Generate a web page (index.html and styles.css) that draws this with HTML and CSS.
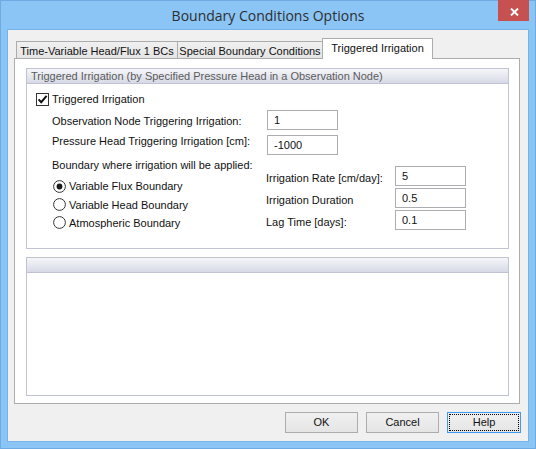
FILE: index.html
```html
<!DOCTYPE html>
<html>
<head>
<meta charset="utf-8">
<title>Boundary Conditions Options</title>
<link rel="stylesheet" href="styles.css">
</head>
<body>
<div class="window">
  <div class="titlebar">
    <span class="title">Boundary Conditions Options</span>
    <div class="close">
      <svg width="9" height="8" viewBox="0 0 9 8"><path d="M1 0.5 L8 7.5 M8 0.5 L1 7.5" stroke="#fff" stroke-width="1.9" fill="none"/></svg>
    </div>
  </div>
  <div class="client">
    <div class="tabs">
      <div class="tab tab-1">Time-Variable Head/Flux 1 BCs</div>
      <div class="tab tab-2">Special Boundary Conditions</div>
      <div class="tab tab-3 active">Triggered Irrigation</div>
    </div>
    <div class="panel">
      <div class="group group-main">
        <div class="ghead">Triggered Irrigation (by Specified Pressure Head in a Observation Node)</div>
        <div class="gbody">
          <div class="check-row">
            <span class="checkbox">
              <svg width="11" height="11" viewBox="0 0 11 11"><path d="M1.6 5.4 L4.2 8.2 L9.6 1.9" stroke="#111" stroke-width="2" fill="none"/></svg>
            </span>
            <span>Triggered Irrigation</span>
          </div>
          <div class="fields">
            <span class="lbl lbl-obs">Observation Node Triggering Irrigation:</span>
            <div class="input">1</div>
            <span class="lbl lbl-pres">Pressure Head Triggering Irrigation [cm]:</span>
            <div class="input">-1000</div>
          </div>
          <div class="split">
            <div class="left">
              <div class="caption">Boundary where irrigation will be applied:</div>
              <div class="radio">
                <svg width="13" height="13" viewBox="0 0 13 13"><circle cx="6.5" cy="6.5" r="5.9" fill="#fff" stroke="#333" stroke-width="1"/><circle cx="6.5" cy="6.5" r="2.9" fill="#1a1a1a"/></svg>
                <span>Variable Flux Boundary</span>
              </div>
              <div class="radio">
                <svg width="13" height="13" viewBox="0 0 13 13"><circle cx="6.5" cy="6.5" r="5.9" fill="#fff" stroke="#333" stroke-width="1"/></svg>
                <span>Variable Head Boundary</span>
              </div>
              <div class="radio">
                <svg width="13" height="13" viewBox="0 0 13 13"><circle cx="6.5" cy="6.5" r="5.9" fill="#fff" stroke="#333" stroke-width="1"/></svg>
                <span>Atmospheric Boundary</span>
              </div>
            </div>
            <div class="right">
              <span class="rlbl">Irrigation Rate [cm/day]:</span>
              <div class="input">5</div>
              <span class="rlbl">Irrigation Duration</span>
              <div class="input">0.5</div>
              <span class="rlbl">Lag Time [days]:</span>
              <div class="input">0.1</div>
            </div>
          </div>
        </div>
      </div>
      <div class="group group-empty">
        <div class="ghead"></div>
      </div>
    </div>
    <div class="buttons">
      <div class="btn">OK</div>
      <div class="btn">Cancel</div>
      <div class="btn btn-focus">Help</div>
    </div>
  </div>
</div>
</body>
</html>
```

FILE: styles.css
```css
html, body {
  margin: 0;
  padding: 0;
  background: #8ac5f6;
}

body {
  font-family: "Liberation Sans", Arial, sans-serif;
  font-size: 11px;
  color: #111;
}

.window {
  width: 536px;
  height: 449px;
  box-sizing: border-box;
  border: 1px solid #6eaae4;
  background: #8ac5f6;
  padding: 0 6px 6px;
  display: flex;
  flex-direction: column;
  position: relative;
}

.titlebar {
  height: 28px;
  box-sizing: border-box;
  padding-top: 2px;
  display: flex;
  justify-content: center;
  align-items: flex-start;
}

.title {
  font-family: "Open Sans", "Noto Sans", sans-serif;
  font-size: 14px;
  line-height: 26px;
  color: #2e2e2e;
}

.close {
  position: absolute;
  top: -1px;
  right: 6px;
  width: 31px;
  height: 21px;
  background: #c75050;
  display: flex;
  justify-content: center;
  align-items: center;
  padding-top: 2px;
  box-sizing: border-box;
}

.close svg {
  display: block;
  margin-left: 2px;
}

.client {
  flex: 1;
  border: 1px solid #78b2ea;
  background: #f0f0f0;
  display: flex;
  flex-direction: column;
}

/* Tabs */
.tabs {
  display: flex;
  align-items: flex-end;
  height: 20px;
  margin: 8px 0 0 8px;
  position: relative;
  z-index: 2;
}

.tab {
  box-sizing: border-box;
  height: 17px;
  border: 1px solid #acacac;
  border-bottom: none;
  background: linear-gradient(#f0f0f0, #e5e5e5);
  text-align: center;
  line-height: 16px;
  padding-top: 1px;
  white-space: nowrap;
}

.tab-1 { width: 162px; }
.tab-2 { width: 146px; margin-left: -1px; }
.tab-3 { width: 111px; margin-left: -1px; }

.tab.active {
  height: 21px;
  margin-bottom: -1px;
  background: #fff;
  padding-top: 1px;
}

/* Panel */
.panel {
  margin-left: 6px;
  width: 506px;
  height: 346px;
  box-sizing: border-box;
  border: 1px solid #acacac;
  background: #fff;
  display: flex;
  flex-direction: column;
  padding: 9px 10px 7px 11px;
  gap: 8px;
}

.group {
  box-sizing: border-box;
  border: 1px solid #bfc3d4;
  background: #fff;
}

.group-main { height: 181px; }
.group-empty { height: 139px; }

.ghead {
  height: 15px;
  box-sizing: border-box;
  border-bottom: 1px solid #bfc3d4;
  background: linear-gradient(#f5f6f9, #d7dae6);
  padding-left: 4px;
  line-height: 14px;
  color: #5b5b5b;
  white-space: nowrap;
}

.gbody {
  padding: 9px 0 0 9px;
}

.check-row {
  display: flex;
  align-items: center;
  gap: 3px;
  height: 13px;
  line-height: 13px;
}

.checkbox {
  width: 13px;
  height: 13px;
  box-sizing: border-box;
  border: 1px solid #333;
  background: #fff;
  display: flex;
  align-items: center;
  justify-content: center;
}

.checkbox svg { display: block; }

.fields {
  display: grid;
  grid-template-columns: 215px 71px;
  grid-auto-rows: 20px;
  row-gap: 5px;
  margin: 4px 0 0 16px;
}

.lbl {
  line-height: 20px;
  white-space: nowrap;
}

.lbl-obs { padding-top: 1px; }
.lbl-pres { margin-top: -4px; }

.input {
  box-sizing: border-box;
  height: 20px;
  border: 1px solid #abadb3;
  background: #fff;
  padding: 1px 0 0 6px;
  line-height: 17px;
}

.split {
  display: flex;
  margin: 3px 0 0 16px;
}

.left {
  width: 214px;
}

.caption {
  height: 14px;
  line-height: 14px;
  margin-bottom: 5px;
  white-space: nowrap;
}

.radio {
  height: 18.4px;
  display: flex;
  align-items: center;
  gap: 3px;
  margin-left: 1px;
  line-height: 18px;
  white-space: nowrap;
}

.radio svg { display: block; flex: none; }

.right {
  padding-top: 8px;
  display: grid;
  grid-template-columns: 129px 71px;
  grid-auto-rows: 20px;
  row-gap: 2px;
  align-content: start;
}

.rlbl {
  line-height: 20px;
  padding-top: 2px;
  white-space: nowrap;
}

/* Buttons */
.buttons {
  display: flex;
  justify-content: flex-end;
  gap: 8px;
  margin-top: 8px;
  padding-right: 7px;
}

.btn {
  box-sizing: border-box;
  width: 73px;
  height: 21px;
  border: 1px solid #acacac;
  background: linear-gradient(#f0f0f0, #e5e5e5);
  text-align: center;
  line-height: 19px;
}

.btn-focus {
  border-color: #3c9af0;
  width: 74px;
  outline: 1px dotted #000;
  outline-offset: -3px;
}
```
